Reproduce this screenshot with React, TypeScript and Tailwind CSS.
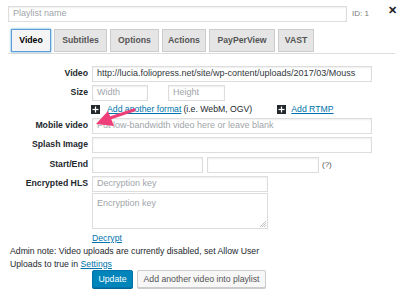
import React from "react";

const font = { fontFamily: '"Liberation Sans", Arial, sans-serif' };

function Input({ className = "", placeholder = "", value = "" }: { className?: string; placeholder?: string; value?: string }) {
  return (
    <div
      className={`h-[16px] shrink-0 border border-[#dddddd] bg-white flex items-center px-[4px] text-[9px] overflow-hidden whitespace-nowrap shadow-[inset_0_1px_2px_rgba(0,0,0,0.07)] ${className}`}
    >
      {value ? <span className="text-[#32373c]">{value}</span> : <span className="text-[#a0a5aa]">{placeholder}</span>}
    </div>
  );
}

function Label({ children, className = "" }: { children?: React.ReactNode; className?: string }) {
  return <div className={`w-[92px] pr-[4px] text-right font-bold text-[8.7px] text-[#23282d] shrink-0 whitespace-nowrap ${className}`}>{children}</div>;
}

function Plus() {
  return (
    <div className="w-[9px] h-[9px] bg-[#23282d] flex items-center justify-center shrink-0">
      <svg width="7" height="7" viewBox="0 0 7 7">
        <rect x="2.9" y="0.5" width="1.2" height="6" fill="#fff" />
        <rect x="0.5" y="2.9" width="6" height="1.2" fill="#fff" />
      </svg>
    </div>
  );
}

const tabs = ["Video", "Subtitles", "Options", "Actions", "PayPerView", "VAST"];
const tabW: Record<string, number> = { Video: 40, Subtitles: 53, Options: 49, Actions: 44, PayPerView: 66, VAST: 36 };

export default function App() {
  return (
    <div className="relative w-[400px] h-[299px] bg-white overflow-hidden text-[#23282d]" style={font}>
      {/* top row */}
      <div className="flex items-center pt-[4px] pl-[8px] h-[20px] box-content">
        <Input className="w-[339px]" placeholder="Playlist name" />
        <span className="ml-[5px] text-[8px] text-[#777] whitespace-nowrap shrink-0">ID: 1</span>
        <span className="ml-[19px] text-[11px] font-bold text-[#222] leading-none -mt-[8px] shrink-0">✕</span>
      </div>
      {/* tabs */}
      <div className="mt-[5px] ml-[8px] mr-[5px] border-b border-[#dddddd] flex gap-[3px] pl-[3px] pb-[1px]">
        {tabs.map((t) => (
          <div
            key={t}
            style={{ width: tabW[t] }}
            className={
              t === "Video"
                ? "h-[23px] flex items-center justify-center text-[8.7px] font-bold bg-[#f4f4f4] border border-[#5b9dd9] shadow-[0_0_2px_rgba(30,140,190,0.8)] text-[#000]"
                : "h-[23px] flex items-center justify-center text-[8.7px] font-bold bg-[#e5e5e5] border border-[#cccccc] text-[#555]"
            }
          >
            {t}
          </div>
        ))}
      </div>
      {/* form */}
      <div className="mt-[12px] flex flex-col">
        <div className="flex items-center">
          <Label>Video</Label>
          <Input className="w-[280px]" value="http://lucia.foliopress.net/site/wp-content/uploads/2017/03/Mouss" />
        </div>
        <div className="flex items-center mt-[3px]">
          <Label>Size</Label>
          <Input className="w-[56px]" placeholder="Width" />
          <Input className="w-[57px] ml-[20px]" placeholder="Height" />
        </div>
        <div className="flex items-center mt-[3px] h-[11px] text-[8.7px]">
          <div className="w-[91px] shrink-0" />
          <Plus />
          <span className="ml-[7px] text-[#0073aa] underline">Add another format</span>
          <span className="ml-[2px] text-[#23282d]">(i.e. WebM, OGV)</span>
          <div className="ml-[25px]"><Plus /></div>
          <span className="ml-[5px] text-[#0073aa] underline">Add RTMP</span>
        </div>
        <div className="flex items-center mt-[3px]">
          <Label>Mobile video</Label>
          <Input className="w-[280px]" placeholder="Put low-bandwidth video here or leave blank" />
        </div>
        <div className="flex items-center mt-[3px]">
          <Label>Splash Image</Label>
          <Input className="w-[280px]" />
        </div>
        <div className="flex items-center mt-[4px]">
          <Label>Start/End</Label>
          <Input className="w-[111px]" />
          <Input className="w-[112px] ml-[4px]" />
          <span className="ml-[3px] text-[8px] text-[#555]">(?)</span>
        </div>
        <div className="flex items-start mt-[3px]">
          <Label className="pt-[1px]">Encrypted HLS</Label>
          <div className="flex flex-col">
            <Input className="w-[176px]" placeholder="Decryption key" />
            <div className="relative w-[176px] h-[36px] mt-[1px] border border-[#dddddd] px-[4px] pt-[3px] text-[9px] text-[#a0a5aa]">
              Encryption key
              <svg className="absolute right-[1px] bottom-[1px]" width="6" height="6" viewBox="0 0 6 6">
                <path d="M6 0 L0 6 M6 2 L2 6 M6 4 L4 6" stroke="#999" strokeWidth="0.6" />
              </svg>
            </div>
            <span className="mt-[3px] text-[8.7px] text-[#0073aa] underline">Decrypt</span>
          </div>
        </div>
        <div className="ml-[10px] mt-0 text-[8.7px] leading-[12.5px] text-[#23282d] whitespace-nowrap">
          Admin note: Video uploads are currently disabled, set Allow User
          <br />
          Uploads to true in <span className="text-[#0073aa] underline">Settings</span>
        </div>
        <div className="flex mt-0 ml-[92px] gap-[4px]">
          <div className="h-[18px] w-[41px] bg-[#0085ba] border border-[#0073aa] rounded-[2px] text-white text-[8.7px] flex items-center justify-center shadow-[0_1px_0_#006799]">
            Update
          </div>
          <div className="h-[18px] w-[129px] bg-[#f7f7f7] border border-[#cccccc] rounded-[2px] text-[#555] text-[8.7px] flex items-center justify-center shadow-[0_1px_0_#cccccc]">
            Add another video into playlist
          </div>
        </div>
      </div>
      {/* pink arrow annotation */}
      <svg className="absolute left-0 top-0 pointer-events-none" width="400" height="299">
        <path d="M134 110 L110 118" stroke="#ee3f7a" strokeWidth="3.2" strokeLinecap="round" />
        <path d="M96 124 L108 111 L114 126 Z" fill="#ee3f7a" />
      </svg>
    </div>
  );
}
